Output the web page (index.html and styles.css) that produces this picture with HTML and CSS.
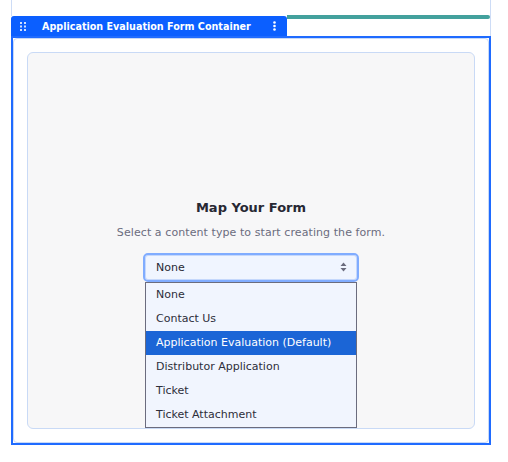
FILE: index.html
```html
<!DOCTYPE html>
<html>
<head>
<meta charset="utf-8">
<link rel="stylesheet" href="styles.css">
</head>
<body>
<div class="page">
  <div class="top-lines"></div>
  <div class="header-row">
    <div class="tab">
      <svg class="drag" width="6" height="9" viewBox="0 0 6 9"><g fill="#cfe0ff"><rect x="0" y="0" width="2" height="2"/><rect x="4" y="0" width="2" height="2"/><rect x="0" y="3.5" width="2" height="2"/><rect x="4" y="3.5" width="2" height="2"/><rect x="0" y="7" width="2" height="2"/><rect x="4" y="7" width="2" height="2"/></g></svg>
      <span class="tab-title">Application Evaluation Form Container</span>
      <svg class="kebab" width="3" height="10" viewBox="0 0 3 10"><g fill="#ffffff"><circle cx="1.5" cy="1.5" r="1.3"/><circle cx="1.5" cy="5" r="1.3"/><circle cx="1.5" cy="8.5" r="1.3"/></g></svg>
    </div>
    <div class="teal-wrap"><div class="teal"></div></div>
  </div>
  <div class="frame">
    <div class="frame-inner">
      <div class="card">
        <div class="content">
          <h2 class="title">Map Your Form</h2>
          <p class="subtitle">Select a content type to start creating the form.</p>
          <div class="select-wrap">
            <div class="select">
              <span>None</span>
              <svg class="arrows" width="7" height="10" viewBox="0 0 7 10"><path d="M3.5 0.5 L6.5 4 H0.5 Z M3.5 9.5 L6.5 6 H0.5 Z" fill="#6b6c7e"/></svg>
            </div>
            <ul class="options">
              <li>None</li>
              <li>Contact Us</li>
              <li class="active">Application Evaluation (Default)</li>
              <li>Distributor Application</li>
              <li>Ticket</li>
              <li>Ticket Attachment</li>
            </ul>
          </div>
        </div>
      </div>
    </div>
  </div>
</div>
</body>
</html>
```
FILE: styles.css
```css
* { box-sizing: border-box; }
html, body { margin: 0; padding: 0; background: #ffffff; }
body { font-family: "DejaVu Sans", sans-serif; }
.page { margin-left: 11px; width: 480px; }
.top-lines {
  height: 16px;
  border-left: 1px solid #cddcf6;
  border-right: 1px solid #cddcf6;
}
.header-row { display: flex; height: 21px; margin-top: -1px; }
.tab {
  width: 276px;
  margin-top: 1px;
  height: 20px;
  background: #0b5fff;
  border-radius: 3px 3px 0 0;
  display: flex;
  align-items: center;
  padding-left: 9px;
  padding-right: 11px;
}
.drag { flex: none; }
.tab-title {
  color: #ffffff;
  font-weight: bold;
  font-size: 9.6px;
  margin-left: 16px;
  flex: 1;
  white-space: nowrap;
}
.kebab { flex: none; }
.teal-wrap { flex: 1; border-right: 1px solid #cddcf6; }
.teal { height: 4px; background: #43a19d; border-radius: 0 2px 2px 0; }
.frame {
  height: 409px;
  border: 2px solid #1f6bff;
  background: #ffffff;
}
.frame-inner {
  height: 100%;
  border: 1px solid #c8d9f7;
  border-radius: 4px;
  padding: 13px 13px 12px 13px;
}
.card {
  height: 377px;
  background: #f7f7f8;
  border: 1px solid #c9daf6;
  border-radius: 6px;
  display: flex;
  align-items: center;
  justify-content: center;
}
.content { display: flex; flex-direction: column; align-items: center; }
.title {
  margin: 0;
  font-size: 13px;
  font-weight: bold;
  color: #272833;
  line-height: 16px;
}
.subtitle {
  margin: 10px 0 0 0;
  font-size: 11px;
  letter-spacing: 0.08px;
  color: #6b6c7e;
  line-height: 14px;
}
.select-wrap { position: relative; margin-top: 13px; }
.select {
  width: 216px;
  height: 29px;
  border: 2px solid #80acff;
  border-radius: 5px;
  background: #f0f5ff;
  box-shadow: inset 0 0 0 1px #c5d8fc;
  display: flex;
  align-items: center;
  justify-content: space-between;
  padding: 0 10px 0 11px;
  font-size: 11px;
  color: #272833;
}
.arrows { flex: none; }
.options {
  position: absolute;
  left: 2px;
  top: 29px;
  width: 212px;
  margin: 0;
  padding: 0;
  list-style: none;
  background: #f1f5fe;
  border: 1px solid #6b6c7e;
}
.options li {
  height: 24px;
  line-height: 24px;
  padding-left: 10px;
  font-size: 11px;
  color: #2d2e3a;
}
.options li.active { background: #1b65d6; color: #ffffff; }
```
